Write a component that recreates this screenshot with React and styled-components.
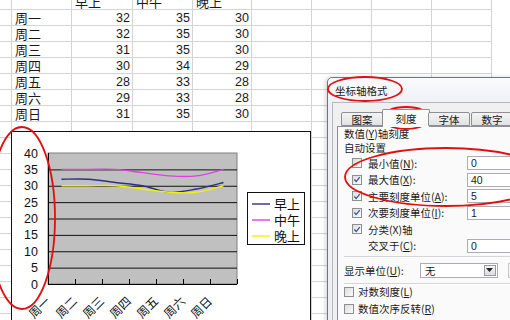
import React from "react";
import styled, {createGlobalStyle} from 'styled-components'

const CJK = `"Noto Sans CJK SC", "Liberation Sans", sans-serif`
const NUM = `"Liberation Sans", "Noto Sans CJK SC", sans-serif`

const GlobalStyle = createGlobalStyle`
  html, body {
    margin: 0;
    padding: 0;
    background: #fff;
    overflow: hidden;
  }
`

const COLS = [12, 60, 61, 60, 59, 60, 60, 60, 60]
const ROWS = 21

const table = [
    ['周一', 32, 35, 30],
    ['周二', 32, 35, 30],
    ['周三', 31, 35, 30],
    ['周四', 30, 34, 29],
    ['周五', 28, 33, 28],
    ['周六', 29, 33, 28],
    ['周日', 31, 35, 30],
]

const series = [
    {name: '早上', color: '#2e2e8a', idx: 1},
    {name: '中午', color: '#e040e0', idx: 2},
    {name: '晚上', color: '#f2f200', idx: 3},
]

// plot area, in chart coordinates
const P = {x: 37, y: 22, w: 189, h: 131}
const yOf = v => P.y + P.h - v * P.h / 40
const xOf = i => P.x + 13.5 + 27 * i

const smooth = vals => {
    const p = vals.map((v, i) => [xOf(i), yOf(v)])
    let d = `M${p[0]}`
    for (let i = 0; i < p.length - 1; i++) {
        const p0 = p[i - 1] || p[i], p1 = p[i], p2 = p[i + 1], p3 = p[i + 2] || p2
        const c1 = [p1[0] + (p2[0] - p0[0]) / 6, p1[1] + (p2[1] - p0[1]) / 6]
        const c2 = [p2[0] - (p3[0] - p1[0]) / 6, p2[1] - (p3[1] - p1[1]) / 6]
        d += ` C${c1} ${c2} ${p2}`
    }
    return d
}

const Check = ({on, faint}) => (
    <Box>
        {(on || faint) && (
            <svg width="9" height="9" viewBox="0 0 9 9">
                <path d="M1.5 4.5 L3.6 6.8 L7.6 1.8" stroke={faint ? '#b8bcc8' : '#3a5a9a'} strokeWidth="1.5"
                      fill="none"/>
            </svg>
        )}
    </Box>
)

export default function App() {
    const cells = []
    for (let r = 0; r < ROWS; r++) {
        for (let c = 0; c < COLS.length; c++) {
            let content = null
            let kind = 'text'
            if (r === 0 && c >= 2 && c <= 4) content = series[c - 2].name
            if (r >= 1 && r <= 7 && c === 1) content = table[r - 1][0]
            if (r >= 1 && r <= 7 && c >= 2 && c <= 4) {
                content = table[r - 1][c - 1]
                kind = 'num'
            }
            cells.push(<Cell key={`${r}-${c}`} kind={kind} head={r === 0}>{content}</Cell>)
        }
    }

    return (
        <>
            <GlobalStyle/>
            <Page>
                <Sheet>{cells}</Sheet>

                <Chart>
                    <svg width="300" height="200" viewBox="0 0 300 200">
                        <rect x={P.x} y={P.y} width={P.w} height={P.h} fill="#c0c0c0" stroke="#808080"/>
                        {[5, 10, 15, 20, 25, 30, 35].map(v => (
                            <line key={v} x1={P.x} x2={P.x + P.w} y1={yOf(v) + 0.5} y2={yOf(v) + 0.5}
                                  stroke="#111" strokeWidth="1"/>
                        ))}
                        <line x1={P.x + 0.5} x2={P.x + 0.5} y1={P.y} y2={P.y + P.h} stroke="#000"/>
                        <line x1={P.x} x2={P.x + P.w} y1={P.y + P.h + 0.5} y2={P.y + P.h + 0.5} stroke="#000"/>
                        {[1, 2, 3, 4, 5, 6, 7].map(k => (
                            <line key={k} x1={P.x + 27 * k + 0.5} x2={P.x + 27 * k + 0.5} y1={P.y + P.h - 5}
                                  y2={P.y + P.h} stroke="#000"/>
                        ))}
                        {[0, 5, 10, 15, 20, 25, 30, 35, 40].map(v => (
                            <text key={v} x="27" y={yOf(v) + 4.5} textAnchor="end" fontSize="12.5"
                                  fontFamily={NUM} fill="#111">{v}</text>
                        ))}
                        {series.map(s => (
                            <path key={s.name} d={smooth(table.map(r => r[s.idx]))} stroke={s.color}
                                  strokeWidth="1.4" fill="none"/>
                        ))}
                        {table.map((r, i) => (
                            <text key={r[0]} x={40 + 27 * i} y="171" transform={`rotate(-45 ${40 + 27 * i} 171)`}
                                  textAnchor="end" fontSize="12" fontFamily={CJK} fill="#111">{r[0]}</text>
                        ))}
                        <rect x="236.5" y="61.5" width="57" height="52" fill="#fff" stroke="#111"/>
                        {series.map((s, i) => (
                            <g key={s.name}>
                                <line x1="241" x2="259" y1={73 + 16 * i} y2={73 + 16 * i} stroke={s.color}
                                      strokeWidth="1.4"/>
                                <text x="263" y={78 + 16 * i} fontSize="13" fontFamily={CJK} fill="#111">{s.name}</text>
                            </g>
                        ))}
                    </svg>
                </Chart>

                <Dialog>
                    <TitleBar>坐标轴格式</TitleBar>
                    <Client>
                        <Tabs>
                            <Tab>图案</Tab>
                            <Tab active>刻度</Tab>
                            <Tab>字体</Tab>
                            <Tab>数字</Tab>
                        </Tabs>
                        <Panel>
                            <Line>数值(<u>Y</u>)轴刻度</Line>
                            <Line>自动设置</Line>
                            <Row>
                                <Check faint/><Label>最小值(<u>N</u>):</Label><Field>0</Field>
                            </Row>
                            <Row>
                                <Check on/><Label>最大值(<u>X</u>):</Label><Field>40</Field>
                            </Row>
                            <Row>
                                <Check on/><Label>主要刻度单位(<u>A</u>):</Label><Field>5</Field>
                            </Row>
                            <Row>
                                <Check on/><Label>次要刻度单位(<u>I</u>):</Label><Field>1</Field>
                            </Row>
                            <Row>
                                <Check on/><Label>分类(X)轴</Label>
                            </Row>
                            <Row>
                                <Spacer/><Label>交叉于(<u>C</u>):</Label><Field>0</Field>
                            </Row>
                            <Sep top={2} bottom={4}/>
                            <UnitRow>
                                <span>显示单位(<u>U</u>):</span>
                                <Select>
                                    <span>无</span>
                                    <DropBtn>
                                        <svg width="7" height="4" viewBox="0 0 7 4">
                                            <path d="M0 0 H7 L3.5 4 Z" fill="#222"/>
                                        </svg>
                                    </DropBtn>
                                </Select>
                                <Ghost/>
                            </UnitRow>
                            <Sep top={5} bottom={-2}/>
                            <OptRow><Check/><span>对数刻度(<u>L</u>)</span></OptRow>
                            <OptRow><Check/><span>数值次序反转(<u>R</u>)</span></OptRow>
                            <OptRow><Check/><span>分类(X)轴交叉于最大值(<u>M</u>)</span></OptRow>
                        </Panel>
                    </Client>
                </Dialog>

                <Marks width="510" height="320" viewBox="0 0 510 320">
                    <ellipse cx="22" cy="218" rx="33" ry="91" stroke="#e01010" strokeWidth="1.8" fill="none"/>
                    <ellipse cx="365" cy="89" rx="37" ry="12" stroke="#e01010" strokeWidth="1.8" fill="none"/>
                    <ellipse cx="406" cy="118" rx="24" ry="11" stroke="#e01010" strokeWidth="1.8" fill="none"/>
                    <ellipse cx="446" cy="177" rx="101" ry="29" stroke="#e01010" strokeWidth="1.8" fill="none"/>
                </Marks>
            </Page>
        </>
    );
}

const Page = styled.div`
  position: relative;
  width: 510px;
  height: 320px;
  overflow: hidden;
  background: #fff;
`

const Sheet = styled.div`
  display: grid;
  grid-template-columns: ${COLS.map(c => c + 'px').join(' ')};
  grid-template-rows: 10px repeat(${ROWS - 1}, 16px);
`

const Cell = styled.div`
  box-sizing: border-box;
  border-right: 1px solid #d4d4d4;
  border-bottom: 1px solid #d4d4d4;
  overflow: hidden;
  display: flex;
  align-items: ${p => p.head ? 'flex-end' : 'center'};
  justify-content: ${p => p.kind === 'num' ? 'flex-end' : 'flex-start'};
  padding: ${p => p.kind === 'num' ? '0 2px 0 0' : '0 0 0 3px'};
  font-family: ${p => p.kind === 'num' ? NUM : CJK};
  font-size: ${p => p.kind === 'num' ? '12.5px' : '13px'};
  line-height: 14px;
  color: #1a1a1a;
  white-space: nowrap;
`

const Chart = styled.div`
  position: absolute;
  left: 11px;
  top: 131px;
  width: 300px;
  height: 200px;
  box-sizing: border-box;
  border: 1px solid #111;
  background: #fff;
  svg {
    display: block;
    margin: -1px 0 0 -1px;
  }
`

const Dialog = styled.div`
  position: absolute;
  left: 327px;
  top: 77px;
  width: 220px;
  height: 270px;
  box-sizing: border-box;
  border: 1px solid #6f7480;
  border-radius: 5px 5px 0 0;
  background: linear-gradient(180deg, #fbfbfd 0px, #eef0f5 25px, #eceef3 100%);
  box-shadow: -2px 0 4px rgba(0, 0, 0, 0.15);
  display: flex;
  flex-direction: column;
  font-family: ${CJK};
  font-size: 10.5px;
  color: #1a1a1a;
`

const TitleBar = styled.div`
  height: 24px;
  display: flex;
  align-items: center;
  padding-left: 7px;
  font-size: 10.5px;
`

const Client = styled.div`
  flex: 1;
  margin: 0 0 0 4px;
  border-left: 1px solid #b4b8c2;
  border-top: 1px solid #b4b8c2;
  background: #f0f0f0;
  padding: 5px 0 0 4px;
  display: flex;
  flex-direction: column;
`

const Tabs = styled.div`
  display: flex;
  align-items: flex-end;
  height: 18px;
  padding-left: 4px;
  position: relative;
  z-index: 1;
`

const Tab = styled.div`
  box-sizing: border-box;
  width: ${p => p.active ? '48px' : '42px'};
  height: ${p => p.active ? '18px' : '14px'};
  margin: ${p => p.active ? '0 -2px -1px -2px' : '0 1px 0 0'};
  display: flex;
  align-items: center;
  justify-content: center;
  border: 1px solid #8c8f98;
  border-bottom: ${p => p.active ? 'none' : '1px solid #8c8f98'};
  border-radius: 2px 2px 0 0;
  background: ${p => p.active ? '#fafafa' : 'linear-gradient(180deg, #f4f4f4, #e2e2e2)'};
`

const Panel = styled.div`
  flex: 1;
  border-left: 1px solid #8c8f98;
  border-top: 1px solid #8c8f98;
  background: #fafafa;
  padding: 0 0 0 6px;
  display: flex;
  flex-direction: column;
`

const Line = styled.div`
  height: 14px;
  line-height: 14px;
  white-space: nowrap;
`

const Row = styled.div`
  height: 16.5px;
  display: flex;
  align-items: center;
  padding-left: 8px;
  white-space: nowrap;
`

const Box = styled.span`
  box-sizing: border-box;
  flex: 0 0 auto;
  width: 10px;
  height: 10px;
  border: 1px solid #8e8f8f;
  background: linear-gradient(135deg, #dcdcdc, #fbfbfb);
  display: inline-flex;
  align-items: center;
  justify-content: center;
`

const Spacer = styled.span`
  width: 10px;
`

const Label = styled.span`
  margin-left: 6px;
  width: 99px;
`

const Field = styled.div`
  box-sizing: border-box;
  width: 60px;
  height: 14px;
  border: 1px solid #abadb3;
  background: #fff;
  padding-left: 3px;
  line-height: 12px;
  font-family: ${NUM};
  font-size: 10.5px;
`

const Sep = styled.div`
  height: 0;
  margin: ${p => p.top}px 0 ${p => p.bottom}px 0;
  border-top: 1px solid #d5d5d5;
  border-bottom: 1px solid #fff;
`

const UnitRow = styled.div`
  height: 16px;
  display: flex;
  align-items: center;
  white-space: nowrap;
  span:first-child {
    width: 76px;
  }
`

const Select = styled.div`
  box-sizing: border-box;
  width: 78px;
  height: 15px;
  border: 1px solid #abadb3;
  background: #fff;
  display: flex;
  align-items: center;
  justify-content: space-between;
  padding: 0 1px 0 4px;
`

const DropBtn = styled.div`
  box-sizing: border-box;
  width: 15px;
  height: 11px;
  border: 1px solid #9a9a9a;
  background: linear-gradient(180deg, #f6f6f6, #dcdcdc);
  display: flex;
  align-items: center;
  justify-content: center;
`

const Ghost = styled.div`
  box-sizing: border-box;
  width: 30px;
  height: 15px;
  margin-left: 10px;
  border: 1px solid #c8c8c8;
  background: #f4f4f4;
`

const OptRow = styled.div`
  height: 17px;
  display: flex;
  align-items: center;
  gap: 4px;
  white-space: nowrap;
`

const Marks = styled.svg`
  position: absolute;
  left: 0;
  top: 0;
  pointer-events: none;
`
